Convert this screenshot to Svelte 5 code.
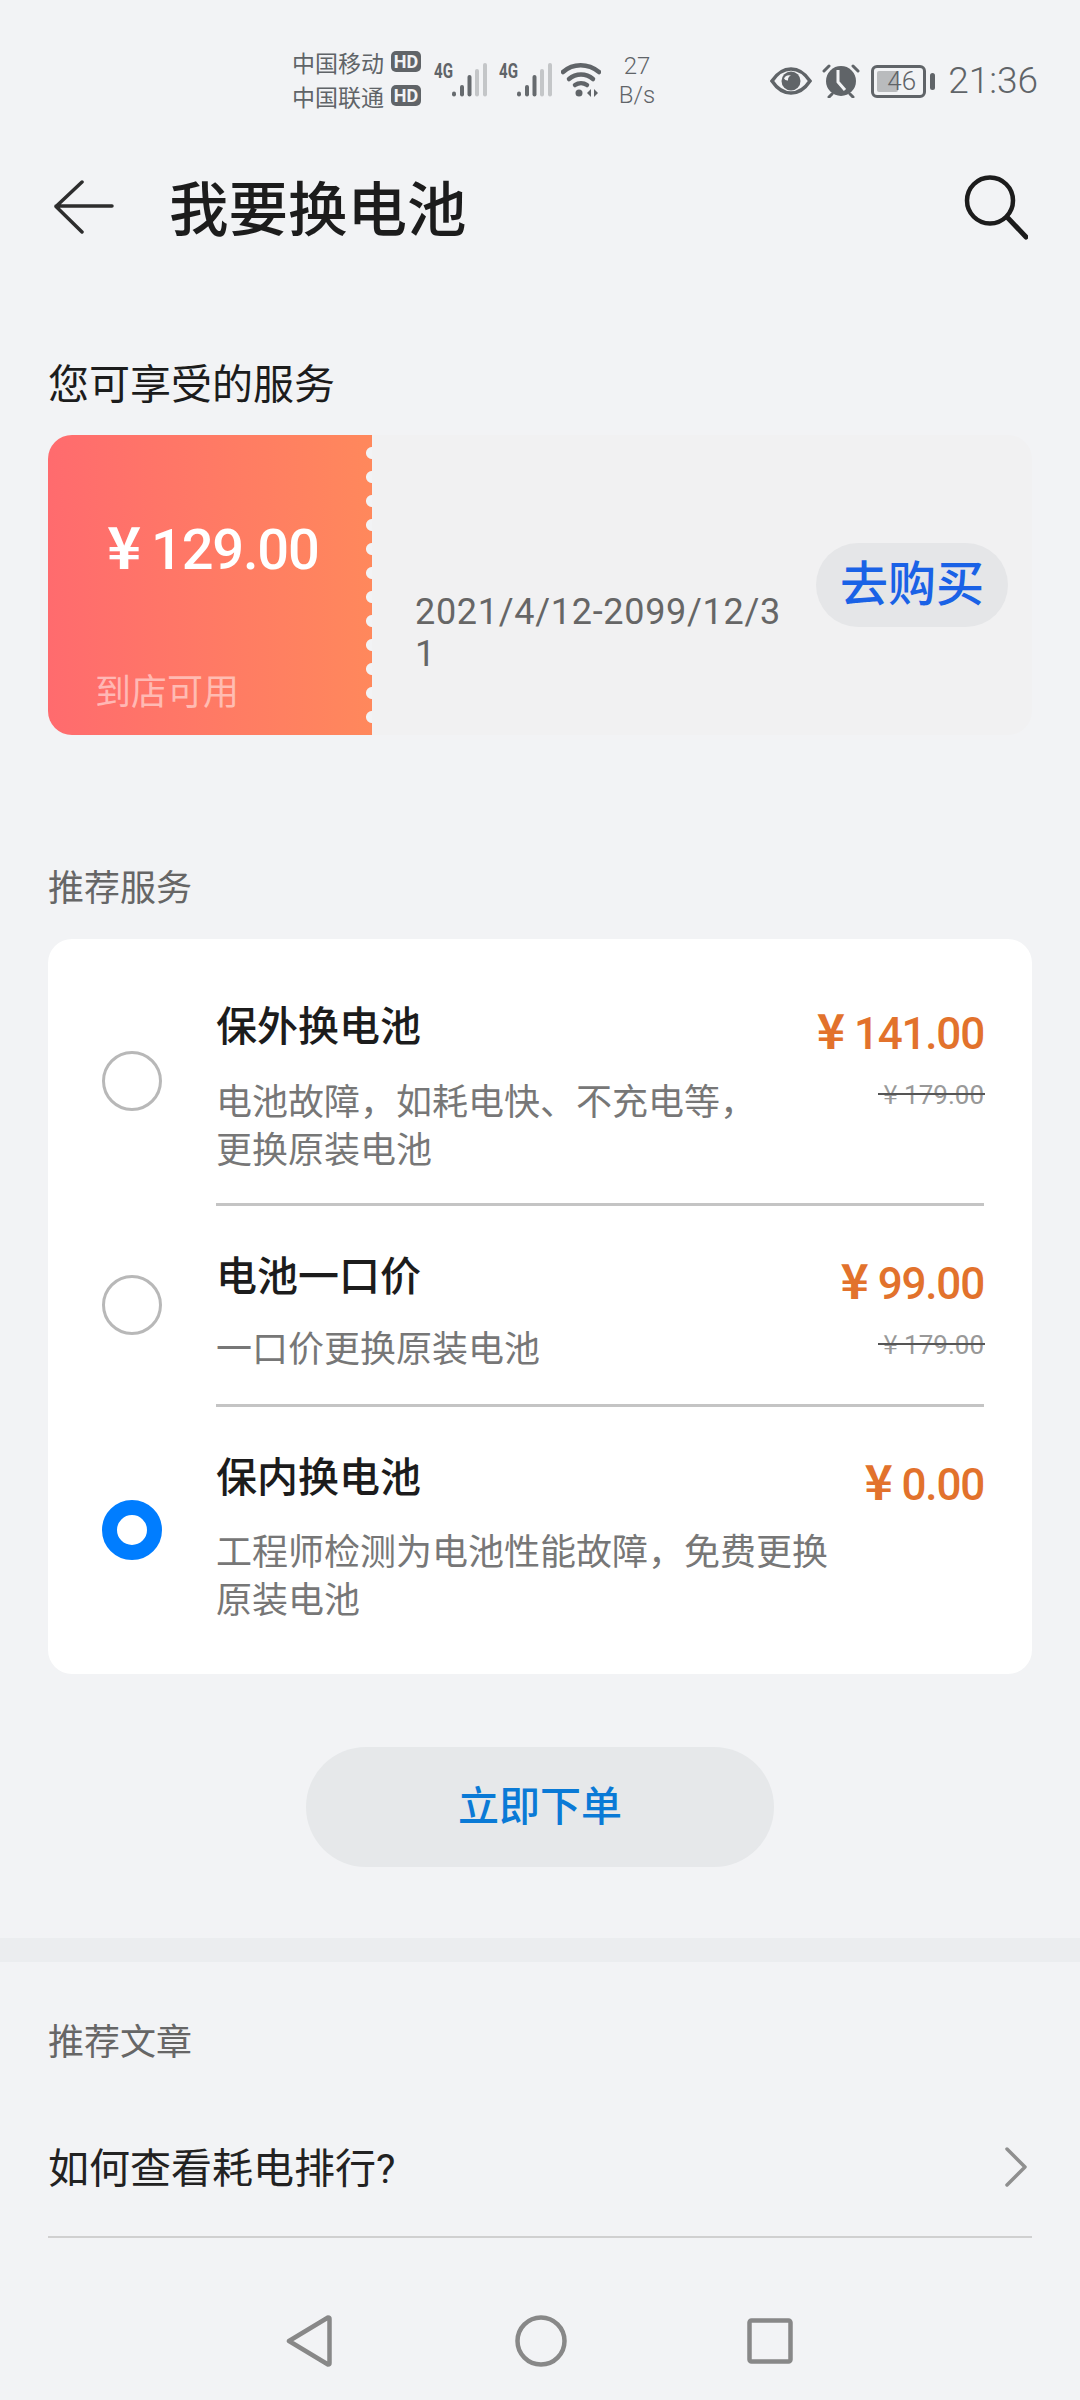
<script>
	const services = [
		{ title: '保外换电池', desc: ['电池故障，如耗电快、不充电等，', '更换原装电池'], price: '141.00', old: '179.00', on: false },
		{ title: '电池一口价', desc: ['一口价更换原装电池'], price: '99.00', old: '179.00', on: false },
		{ title: '保内换电池', desc: ['工程师检测为电池性能故障，免费更换', '原装电池'], price: '0.00', old: '', on: true }
	];
</script>

{#snippet signal()}
	<div class="net">
		<span class="g4">4G</span>
		<svg width="36" height="34" viewBox="0 0 36 34">
			<g stroke-width="4" stroke-linecap="round" fill="none">
				<path d="M2 30.500v1" stroke="#666a6e" />
				<path d="M10 24v7.500" stroke="#666a6e" />
				<path d="M17.500 14v17.500" stroke="#666a6e" />
				<path d="M25 8v23.500" stroke="#c4c6c8" />
				<path d="M33 2v29.500" stroke="#c4c6c8" />
			</g>
		</svg>
	</div>
{/snippet}

<div class="page">
	<div class="status">
		<div class="carriers">
			<div class="carrier">中国移动<span class="hd">HD</span></div>
			<div class="carrier">中国联通<span class="hd">HD</span></div>
		</div>
		{@render signal()}
		{@render signal()}
		<svg class="wifi" width="40" height="36" viewBox="0 0 40 36">
			<g fill="none" stroke="#606468" stroke-width="4.500" stroke-linecap="round">
				<path d="M2 10C12 1 27 1 38 10" />
				<path d="M8 17C15 11 25 11 32 17" />
				<path d="M14 23C17.500 20.500 22.500 20.500 26 23" />
			</g>
			<circle cx="18" cy="31" r="3.500" fill="#606468" />
			<path d="M30 27v8l-4-4zM33 27v8l4-4z" fill="#606468" />
		</svg>
		<div class="speed"><span>27</span><span>B/s</span></div>
		<div class="spacer"></div>
		<svg class="eye" width="42" height="28" viewBox="0 0 42 28">
			<path d="M2 14C8 5 14 2 21 2s13 3 19 12c-6 9-12 12-19 12S8 23 2 14z" fill="none" stroke="#606468" stroke-width="3.500" />
			<circle cx="21" cy="14" r="9.500" fill="#606468" />
			<path d="M14 11.500a6 6 0 0 1 7-3 5 5 0 0 0-3 5 4 4 0 0 1-4-2z" fill="#f2f3f5" />
		</svg>
		<svg class="alarm" width="38" height="34" viewBox="0 0 38 34">
			<circle cx="19" cy="17" r="15" fill="#606468" />
			<path d="M2 7l5-5M36 7l-5-5M7 33l3-3M31 33l-3-3" stroke="#606468" stroke-width="3" stroke-linecap="round" />
			<path d="M16 6v12l7 8" fill="none" stroke="#f2f3f5" stroke-width="3" />
		</svg>
		<div class="battery">
			<div class="cell">
				<div class="fill"></div>
				<span>46</span>
			</div>
			<div class="nub"></div>
		</div>
		<div class="time">21:36</div>
	</div>

	<header class="top">
		<svg class="back" width="60" height="54" viewBox="0 0 60 54">
			<path d="M58 26H2M28 2L2 26.500 28 52" fill="none" stroke="#2d2d2d" stroke-width="3.500" stroke-linecap="round" stroke-linejoin="round" />
		</svg>
		<h1>我要换电池</h1>
		<svg class="search" width="66" height="66" viewBox="0 0 66 66">
			<circle cx="28" cy="26.500" r="23" fill="none" stroke="#1c1c1c" stroke-width="4.500" />
			<path d="M45 43l19 20" stroke="#1c1c1c" stroke-width="5" stroke-linecap="round" />
		</svg>
	</header>

	<h2 class="heading">您可享受的服务</h2>

	<section class="coupon">
		<div class="ticket">
			<div class="amount"><span class="yen">¥</span>129.00</div>
			<div class="where">到店可用</div>
		</div>
		<div class="dates">2021/4/12-2099/12/31</div>
		<div class="buy">去购买</div>
	</section>

	<h3 class="label rec">推荐服务</h3>

	<section class="list">
		{#each services as s, i}
			<div class="row" class:first={i === 0} class:mid={i === 1}>
				<div class="radio" class:on={s.on}></div>
				<div class="body" class:line={i < 2}>
					<div class="text">
						<div class="name">{s.title}</div>
						<div class="desc">
							{#each s.desc as d}<div>{d}</div>{/each}
						</div>
					</div>
					<div class="prices">
						<div class="price"><span class="yen">¥</span>{s.price}</div>
						{#if s.old}<div class="old"><span><i>¥</i> {s.old}</span></div>{/if}
					</div>
				</div>
			</div>
		{/each}
	</section>

	<div class="order">立即下单</div>

	<div class="band"></div>

	<h3 class="label art">推荐文章</h3>

	<div class="article">
		<span>如何查看耗电排行?</span>
		<svg width="24" height="40" viewBox="0 0 24 40">
			<path d="M3 2q12 12 18 18q-6 6-18 18" fill="none" stroke="#8f8f8f" stroke-width="3.500" stroke-linecap="round" stroke-linejoin="round" />
		</svg>
	</div>

	<nav class="nav">
		<svg width="46" height="52" viewBox="0 0 46 52">
			<path d="M3 26L42 2.500q1.500 0 1.500 1.500v44q0 1.500-1.500 1.500z" fill="none" stroke="#888" stroke-width="4.500" stroke-linejoin="round" />
		</svg>
		<svg width="52" height="52" viewBox="0 0 52 52">
			<circle cx="26" cy="26" r="23.500" fill="none" stroke="#888" stroke-width="4.500" />
		</svg>
		<svg width="46" height="46" viewBox="0 0 46 46">
			<rect x="2.500" y="2.500" width="41" height="41" rx="2" fill="none" stroke="#888" stroke-width="4.500" />
		</svg>
	</nav>
</div>

<style>
	:global(body) {
		margin: 0;
		background: #f2f3f5;
	}
	.page {
		width: 1080px;
		height: 2400px;
		overflow: hidden;
		background: #f2f3f5;
		font-family: Roboto, 'Noto Sans CJK SC', sans-serif;
		color: #1c1c1c;
	}
	h1,
	h2,
	h3 {
		margin: 0;
		font-weight: 400;
	}

	.status {
		height: 120px;
		display: flex;
		align-items: center;
		padding: 0 42px 0 292px;
		color: #606468;
		box-sizing: border-box;
	}
	.carriers {
		width: 142px;
		margin-top: 37px;
	}
	.carrier {
		height: 34px;
		display: flex;
		align-items: center;
		font-size: 23px;
		white-space: nowrap;
	}
	.hd {
		margin-left: 7px;
		width: 30px;
		height: 21px;
		border-radius: 5px;
		background: #606468;
		color: #f2f3f5;
		font-size: 18px;
		font-weight: 700;
		line-height: 21px;
		text-align: center;
	}
	.net {
		width: 65px;
		height: 34px;
		margin-top: 40px;
		display: flex;
		align-items: flex-start;
	}
	.g4 {
		width: 18px;
		font-size: 21px;
		font-weight: 700;
		line-height: 16px;
		transform: scaleX(0.72);
		transform-origin: left;
	}
	.wifi {
		margin: 40px 0 0 -3px;
	}
	.speed {
		width: 56px;
		margin: 42px 0 0 8px;
		display: flex;
		flex-direction: column;
		align-items: center;
		font-size: 24px;
		line-height: 29px;
		font-weight: 300;
	}
	.spacer {
		flex: 1;
	}
	.eye {
		margin-top: 42px;
	}
	.alarm {
		margin: 42px 0 0 10px;
	}
	.battery {
		margin: 42px 0 0 11px;
		display: flex;
		align-items: center;
		gap: 4px;
	}
	.cell {
		width: 55px;
		height: 33px;
		box-sizing: border-box;
		border: 3px solid #606468;
		border-radius: 6px;
		padding: 3px;
		display: flex;
		position: relative;
	}
	.fill {
		width: 21px;
		background: #b9bbbd;
		border-radius: 2px;
	}
	.cell span {
		position: absolute;
		left: 9px;
		right: 3px;
		top: -3px;
		font-size: 26px;
		line-height: 33px;
		font-weight: 300;
		text-align: center;
	}
	.nub {
		width: 5px;
		height: 17px;
		border-radius: 3px;
		background: #606468;
	}
	.time {
		margin: 42px 0 0 13px;
		font-size: 37px;
		font-weight: 300;
		line-height: 44px;
	}

	.top {
		height: 174px;
		display: flex;
		align-items: center;
		padding: 0 52px 0 54px;
	}
	.top h1 {
		margin: 7px 0 0 55px;
		flex: 1;
		font-size: 59.500px;
		font-weight: 500;
		line-height: 70px;
	}

	.heading {
		margin: 66px 0 0 48px;
		font-size: 41px;
		line-height: 50px;
		height: 50px;
	}

	.coupon {
		margin: 25px 48px 0;
		height: 300px;
		display: flex;
		align-items: flex-start;
		background: #f1f1f2;
		border-radius: 24px;
	}
	.ticket {
		width: 324px;
		height: 300px;
		box-sizing: border-box;
		padding: 74px 0 0 47px;
		color: #fff;
		border-radius: 24px 0 0 24px;
		background:
			radial-gradient(circle at 100% 12px, #f2f3f5 5.500px, transparent 6.500px) right top 6px / 8px 24px repeat-y,
			linear-gradient(90deg, #ff6b6e, #ff885c);
		background-color: #ff885c;
	}
	.amount {
		margin-left: 12px;
		font-size: 56px;
		line-height: 70px;
		font-weight: 500;
		letter-spacing: -1.200px;
		white-space: nowrap;
	}
	.yen {
		font-family: 'Noto Sans CJK SC', sans-serif;
		font-weight: 700;
	}
	.amount .yen {
		font-size: 58px;
		margin-right: 11px;
	}
	.where {
		margin-top: 83px;
		font-size: 36px;
		line-height: 50px;
		color: rgba(255, 255, 255, 0.5);
	}
	.dates {
		width: 374px;
		margin: 156px 0 0 43px;
		font-size: 36px;
		line-height: 42px;
		color: #666;
		word-break: break-all;
		letter-spacing: 0.7px;
	}
	.buy {
		width: 192px;
		height: 84px;
		margin: 108px 0 0 27px;
		border-radius: 42px;
		background: #e5e6e8;
		color: #1a62e6;
		font-size: 48px;
		font-weight: 500;
		line-height: 84px;
		text-align: center;
	}

	.label {
		margin-left: 48px;
		font-size: 36px;
		line-height: 50px;
		color: #666;
	}
	.rec {
		margin-top: 129px;
	}

	.list {
		margin: 25px 48px 0;
		padding: 20px 48px 18px 0;
		background: #fff;
		border-radius: 24px;
	}
	.row {
		display: flex;
		align-items: center;
	}
	.radio {
		flex: none;
		width: 60px;
		height: 60px;
		margin: 0 54px 3px 54px;
		box-sizing: border-box;
		border: 3px solid #b8b8b8;
		border-radius: 50%;
	}
	.radio.on {
		border: 15px solid #007dff;
		background: #fff;
	}
	.body {
		flex: 1;
		display: flex;
		justify-content: space-between;
		padding: 43px 0 31px;
	}
	.first .body {
		padding-top: 40px;
		padding-bottom: 28px;
	}
	.mid .body {
		padding-top: 43px;
		padding-bottom: 30px;
	}
	.line {
		border-bottom: 3px solid #c4c4c4;
	}
	.name {
		font-size: 41px;
		font-weight: 500;
		line-height: 56px;
		color: #1c1c1c;
	}
	.desc {
		margin-top: 23px;
		font-size: 36px;
		line-height: 48px;
		color: #777;
		white-space: nowrap;
	}
	.first .desc {
		margin-top: 24px;
	}
	.mid .desc {
		margin-top: 21px;
	}
	.prices {
		text-align: right;
	}
	.price {
		margin-top: 1px;
		font-size: 44px;
		font-weight: 500;
		line-height: 56px;
		letter-spacing: -1.200px;
		color: #e2722c;
		white-space: nowrap;
	}
	.price .yen {
		font-size: 48px;
		margin-right: 10px;
	}
	.old {
		margin-top: 11px;
		font-size: 26px;
		line-height: 40px;
		color: #999;
		white-space: nowrap;
	}
	.old i {
		font-style: normal;
		font-family: 'Noto Sans CJK SC', sans-serif;
	}
	.old span {
		position: relative;
		display: inline-block;
	}
	.old span::after {
		content: '';
		position: absolute;
		left: -5px;
		right: -1px;
		top: 20px;
		height: 2px;
		background: #555;
	}

	.order {
		width: 468px;
		height: 120px;
		margin: 73px auto 0;
		border-radius: 60px;
		background: #e6e8ea;
		color: #0a7ad6;
		font-size: 41px;
		font-weight: 500;
		line-height: 121px;
		text-align: center;
	}

	.band {
		height: 24px;
		margin-top: 71px;
		background: #ebedef;
	}
	.art {
		margin-top: 56px;
	}
	.article {
		margin: 71px 48px 0;
		height: 99px;
		box-sizing: border-box;
		padding: 0 4px 37px 0;
		display: flex;
		align-items: center;
		justify-content: space-between;
		font-size: 41px;
		line-height: 50px;
		color: #222;
		border-bottom: 2px solid #d0d0d0;
	}
	.article svg {
		margin-bottom: 4px;
	}
	.nav {
		margin-top: 77px;
		display: flex;
		align-items: center;
		padding-left: 286px;
	}
	.nav svg:nth-child(2) {
		margin-left: 183px;
	}
	.nav svg:nth-child(3) {
		margin-left: 180px;
	}
</style>
